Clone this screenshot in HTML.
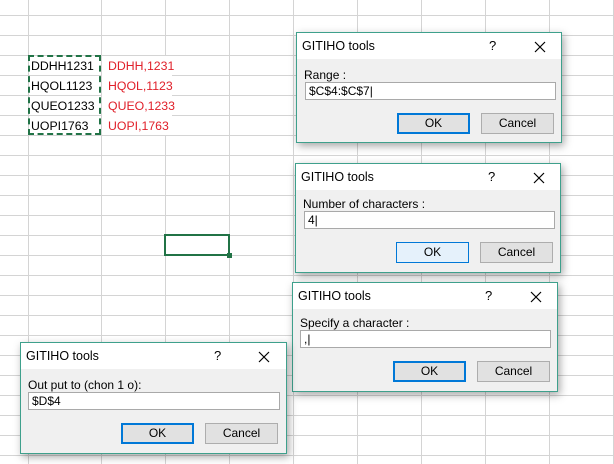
<!DOCTYPE html><html><head><style>
body{margin:0;width:614px;height:464px;overflow:hidden;position:relative;font-family:"Liberation Sans",sans-serif;background:#fff}
.grid{position:absolute;inset:0;background-image:linear-gradient(to right,#d4d4d4 1px,transparent 1px),linear-gradient(to bottom,#d4d4d4 1px,transparent 1px);background-size:64px 20px;background-position:37px 15px}
.cell{position:absolute;font-size:12.3px;line-height:20px}
.dlg{position:absolute;background:#f0f0f0;border:1px solid #3ea08c;box-shadow:2px 3px 8px rgba(0,0,0,.35);font-size:12px;color:#000}
.tb{background:#fff;height:26px;position:relative}
.tb .t{position:absolute;left:5px;top:6px;font-size:12.5px}
.tb .q{position:absolute;top:5px;font-size:13px}
.tb svg{position:absolute;top:8px}
.lbl{position:absolute;font-size:12px}
.inp{position:absolute;background:#fff;border:1px solid #a9a9a9;height:18px;box-sizing:border-box;font-size:12px;line-height:16px;padding-left:3px}
.btn{position:absolute;width:73px;height:21px;box-sizing:border-box;border:1px solid #adadad;background:#e1e1e1;text-align:center;line-height:19px;font-size:12px}
.ok{border:2px solid #0078d7;line-height:17px}
</style></head><body>
<div class="grid"></div>
<div style="position:absolute;left:0;top:0;width:100px;height:464px;background:linear-gradient(to bottom,#d4d4d4 1px,transparent 1px) 0 15px/100px 20px;background-color:#fff"></div>
<div style="position:absolute;left:28px;top:0;width:1px;height:464px;background:#d4d4d4"></div>
<div style="position:absolute;left:28px;top:55px;width:73px;height:80px;box-sizing:border-box;border:2px dashed #217346"></div>
<div class="cell" style="left:31px;top:56px">DDHH1231</div>
<div class="cell" style="left:31px;top:76px">HQOL1123</div>
<div class="cell" style="left:31px;top:96px">QUEO1233</div>
<div class="cell" style="left:31px;top:116px">UOPI1763</div>
<div style="position:absolute;left:102px;top:56px;width:70px;height:79px;background:#fff"></div>
<div class="cell" style="left:108px;top:56px;color:#e0202a">DDHH,1231</div>
<div class="cell" style="left:108px;top:76px;color:#e0202a">HQOL,1123</div>
<div class="cell" style="left:108px;top:96px;color:#e0202a">QUEO,1233</div>
<div class="cell" style="left:108px;top:116px;color:#e0202a">UOPI,1763</div>
<div style="position:absolute;left:164px;top:234px;width:66px;height:22px;box-sizing:border-box;border:2px solid #217346"></div>
<div style="position:absolute;left:227px;top:253px;width:5px;height:5px;background:#217346"></div>

<div class="dlg" style="left:296px;top:32px;width:264px;height:109px">
<div class="tb"><span class="t">GITIHO tools</span><span class="q" style="left:192px">?</span><svg style="left:237px" width="12" height="12"><path d="M1 1L11 11M11 1L1 11" stroke="#000" stroke-width="1.2"/></svg></div>
<div class="lbl" style="left:7px;top:35px">Range :</div>
<div class="inp" style="left:8px;top:49px;width:251px">$C$4:$C$7|</div>
<div class="btn ok" style="left:100px;top:80px">OK</div>
<div class="btn" style="left:184px;top:80px">Cancel</div>
</div>

<div class="dlg" style="left:295px;top:163px;width:264px;height:108px">
<div class="tb"><span class="t">GITIHO tools</span><span class="q" style="left:192px">?</span><svg style="left:237px" width="12" height="12"><path d="M1 1L11 11M11 1L1 11" stroke="#000" stroke-width="1.2"/></svg></div>
<div class="lbl" style="left:7px;top:33px">Number of characters :</div>
<div class="inp" style="left:8px;top:47px;width:251px">4|</div>
<div class="btn" style="left:100px;top:78px;border-color:#0078d7;background:#e5f1fb">OK</div>
<div class="btn" style="left:184px;top:78px">Cancel</div>
</div>

<div class="dlg" style="left:292px;top:282px;width:264px;height:108px">
<div class="tb"><span class="t">GITIHO tools</span><span class="q" style="left:192px">?</span><svg style="left:237px" width="12" height="12"><path d="M1 1L11 11M11 1L1 11" stroke="#000" stroke-width="1.2"/></svg></div>
<div class="lbl" style="left:7px;top:33px">Specify a character :</div>
<div class="inp" style="left:7px;top:47px;width:251px">,|</div>
<div class="btn ok" style="left:100px;top:78px">OK</div>
<div class="btn" style="left:184px;top:78px">Cancel</div>
</div>

<div class="dlg" style="left:20px;top:342px;width:265px;height:110px">
<div class="tb"><span class="t">GITIHO tools</span><span class="q" style="left:193px">?</span><svg style="left:237px" width="12" height="12"><path d="M1 1L11 11M11 1L1 11" stroke="#000" stroke-width="1.2"/></svg></div>
<div class="lbl" style="left:7px;top:35px">Out put to (chon 1 o):</div>
<div class="inp" style="left:7px;top:49px;width:252px">$D$4</div>
<div class="btn ok" style="left:100px;top:80px">OK</div>
<div class="btn" style="left:184px;top:80px">Cancel</div>
</div>
</body></html>
